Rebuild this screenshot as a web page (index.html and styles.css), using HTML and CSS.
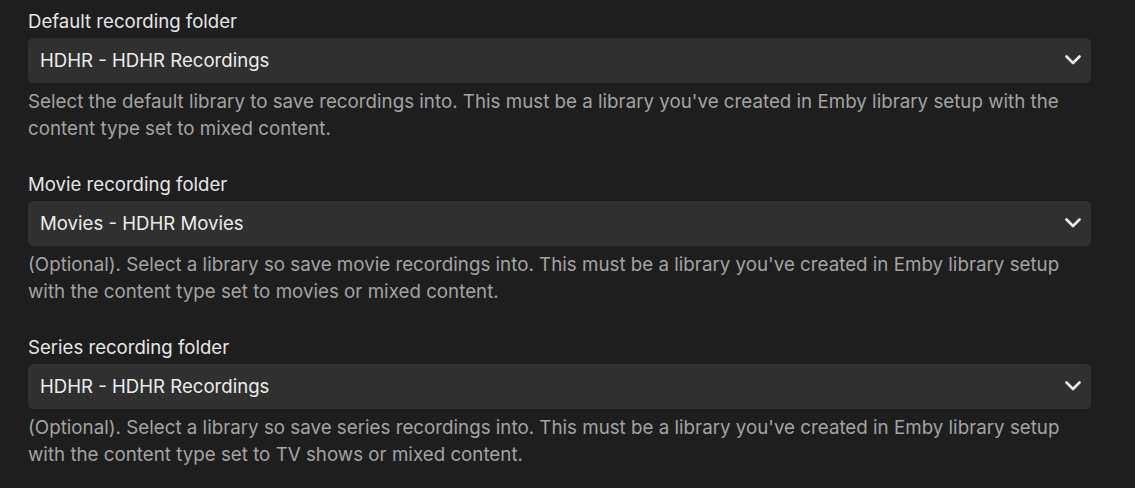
FILE: index.html
```html
<!DOCTYPE html>
<html>
<head>
<meta charset="utf-8">
<link rel="stylesheet" href="styles.css">
</head>
<body>
<div class="form">
  <div class="field">
    <label class="label">Default recording folder</label>
    <div class="select">
      <span class="value">HDHR - HDHR Recordings</span>
      <svg class="chev" width="16" height="10" viewBox="0 0 16 10"><path d="M1.5 1.5 L8 8 L14.5 1.5" fill="none" stroke="#ececec" stroke-width="2.6" stroke-linecap="round" stroke-linejoin="round"/></svg>
    </div>
    <div class="desc">Select the default library to save recordings into. This must be a library you've created in Emby library setup with the content type set to mixed content.</div>
  </div>
  <div class="field">
    <label class="label">Movie recording folder</label>
    <div class="select">
      <span class="value">Movies - HDHR Movies</span>
      <svg class="chev" width="16" height="10" viewBox="0 0 16 10"><path d="M1.5 1.5 L8 8 L14.5 1.5" fill="none" stroke="#ececec" stroke-width="2.6" stroke-linecap="round" stroke-linejoin="round"/></svg>
    </div>
    <div class="desc">(Optional). Select a library so save movie recordings into. This must be a library you've created in Emby library setup with the content type set to movies or mixed content.</div>
  </div>
  <div class="field">
    <label class="label">Series recording folder</label>
    <div class="select">
      <span class="value">HDHR - HDHR Recordings</span>
      <svg class="chev" width="16" height="10" viewBox="0 0 16 10"><path d="M1.5 1.5 L8 8 L14.5 1.5" fill="none" stroke="#ececec" stroke-width="2.6" stroke-linecap="round" stroke-linejoin="round"/></svg>
    </div>
    <div class="desc">(Optional). Select a library so save series recordings into. This must be a library you've created in Emby library setup with the content type set to TV shows or mixed content.</div>
  </div>
</div>
</body>
</html>
```
FILE: styles.css
```css
html, body {
  margin: 0;
  padding: 0;
  background: #1e1e1e;
  font-family: Inter, "Noto Sans", sans-serif;
}
.form {
  padding: 9px 44px 0 28px;
  display: flex;
  flex-direction: column;
}
.field {
  display: flex;
  flex-direction: column;
  margin-bottom: 30.5px;
}
.label {
  display: block;
  color: #e6e6e6;
  font-size: 18.6px;
  line-height: 24px;
  margin-bottom: 5px;
}
.select {
  height: 44.5px;
  background: #303030;
  border-radius: 5px;
  display: flex;
  align-items: center;
  justify-content: space-between;
  padding: 0 10px 0 12px;
  box-sizing: border-box;
}
.value {
  color: #ececec;
  font-size: 18.6px;
}
.chev {
  display: block;
}
.desc {
  margin-top: 5px;
  color: #a3a3a3;
  font-size: 18.75px;
  line-height: 27px;
}
```
